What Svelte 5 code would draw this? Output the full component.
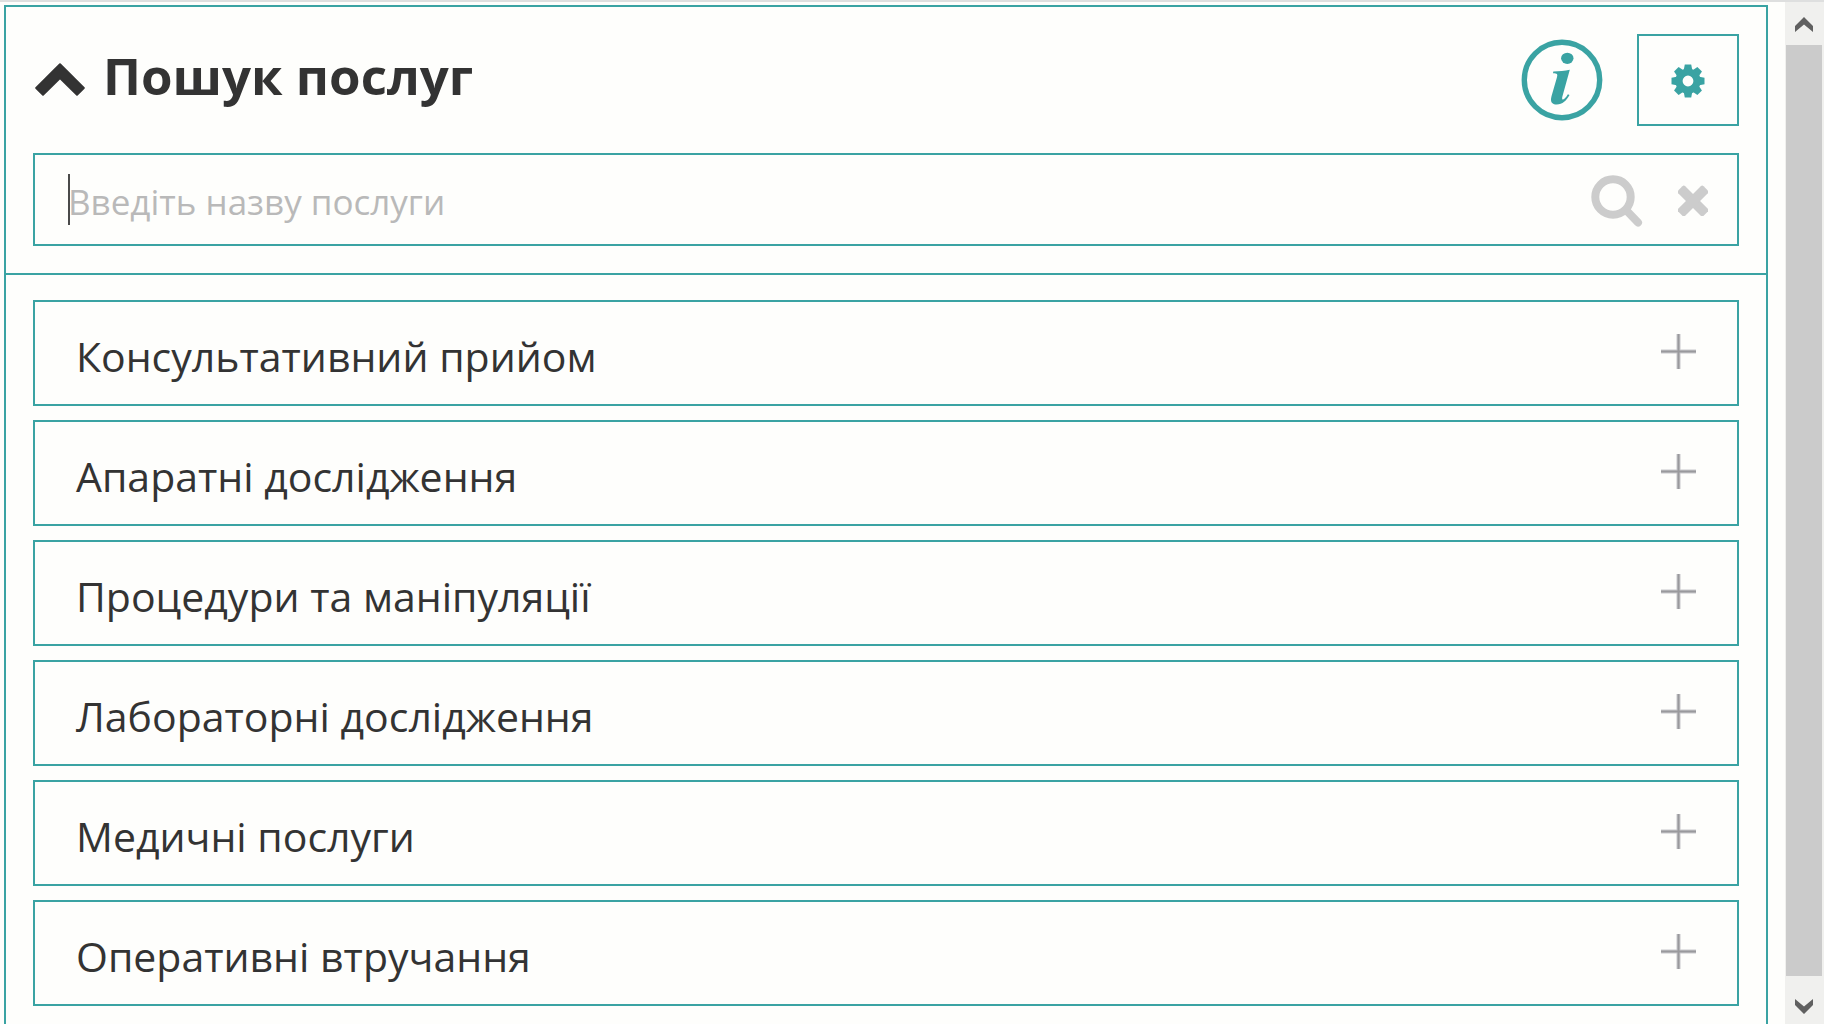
<script lang="ts">
  type Group = { id: number; title: string };

  const groups: Group[] = [
    { id: 1, title: "Консультативний прийом" },
    { id: 2, title: "Апаратні дослідження" },
    { id: 3, title: "Процедури та маніпуляції" },
    { id: 4, title: "Лабораторні дослідження" },
    { id: 5, title: "Медичні послуги" },
    { id: 6, title: "Оперативні втручання" }
  ];

  const teeth = [0, 45, 90, 135, 180, 225, 270, 315];

  let query = "";

  function clear() {
    query = "";
  }
</script>

<div class="page">
  <main class="panel">
    <header class="head">
      <div class="title-row">
        <button class="icon-btn" aria-label="Згорнути">
          <svg width="50" height="35" viewBox="0 0 50 35">
            <path d="M25 1.200 48.800 25 42 31.800 25 15 8 31.800 1.200 25z" fill="#333" stroke="#333" stroke-width="2" stroke-linejoin="round" />
          </svg>
        </button>
        <h1>Пошук послуг</h1>
        <button class="icon-btn info" aria-label="Інформація">
          <svg width="82" height="82" viewBox="0 0 82 82">
            <circle cx="41" cy="41" r="37.7" fill="none" stroke="#3aa3a3" stroke-width="5.4" />
            <ellipse cx="46.3" cy="19.3" rx="6.2" ry="5.6" fill="#3aa3a3" />
            <path d="M32.300 32.600C38 32.300 44 31.800 48.800 30.800L41.400 57.500c-.8 3.200.3 3.800 2 2.300 1.400-1.200 2.500-2.700 3.500-4.600l1.600.9C45.500 61.500 41.500 65.600 35.800 65.600c-5 0-6.800-3-5.300-8.300l5.400-18.800c1-3.500.4-4.300-3.900-4.300z" fill="#3aa3a3" />
          </svg>
        </button>
        <button class="settings" aria-label="Налаштування">
          <svg width="34" height="36" viewBox="-17 -19 34 36">
            {#each teeth as a}
              <path d="M-4.500-10-3.200-16.500h6.400L4.500-10z" fill="#3aa3a3" transform="rotate({a})" />
            {/each}
            <circle r="9" fill="none" stroke="#3aa3a3" stroke-width="7.2" />
          </svg>
        </button>
      </div>

      <div class="search">
        {#if !query}<span class="caret"></span>{/if}
        <input type="text" bind:value={query} placeholder="Введіть назву послуги" aria-label="Введіть назву послуги" />
        <button class="icon-btn" aria-label="Шукати">
          <svg width="52" height="54" viewBox="0 -2 52 54">
            <circle cx="22" cy="22" r="17.7" fill="none" stroke="#ccc" stroke-width="8" />
            <path d="m35 35 12 12.500" stroke="#ccc" stroke-width="8" stroke-linecap="round" />
          </svg>
        </button>
        <button class="icon-btn clear" aria-label="Очистити" on:click={clear}>
          <svg width="30" height="32" viewBox="-15 -17 30 32">
            <rect x="-18" y="-5" width="36" height="10" rx="2" fill="#ccc" transform="rotate(45)" />
            <rect x="-18" y="-5" width="36" height="10" rx="2" fill="#ccc" transform="rotate(-45)" />
          </svg>
        </button>
      </div>
    </header>

    <div class="list">
      {#each groups as g (g.id)}
        <button class="item">
          <span>{g.title}</span>
          <svg width="35" height="35" viewBox="0 0 35 35">
            <path d="M17.500 0v35M0 17.500h35" stroke="#c8c8cb" stroke-width="4" />
            <path d="M17.500 0v35M0 17.500h35" stroke="#99999d" stroke-width="2" />
          </svg>
        </button>
      {/each}
    </div>
  </main>

  <div class="scroll">
    <button class="arrow" aria-label="Вгору">
      <svg width="18" height="15" viewBox="0 0 18 15">
        <path d="m9 0 9 9v6L9 7.500 0 15V9z" fill="#606060" />
      </svg>
    </button>
    <div class="thumb"></div>
    <button class="arrow down" aria-label="Вниз">
      <svg width="18" height="15" viewBox="0 0 18 15">
        <path d="m9 15 9-9V0L9 7.500 0 0v6z" fill="#606060" />
      </svg>
    </button>
  </div>
</div>

<style>
  :global(body) {
    margin: 0;
    background: #fefefc;
    color: #333;
    font-family: "Segoe UI", "Open Sans", "Noto Sans", sans-serif;
  }
  .page {
    box-sizing: border-box;
    display: flex;
    height: 100vh;
    overflow: hidden;
    border-top: 2px solid #dedfdf;
  }
  .panel {
    flex: 1;
    min-width: 0;
    margin: 3px 17px 0 4px;
    border: 2px solid #3aa3a3;
    border-bottom: 0;
  }
  button { padding: 0; border: 0; background: none; color: inherit; font: inherit; cursor: pointer; }
  svg { display: block; }

  .head { padding: 27px; border-bottom: 2px solid #3aa3a3; }
  .title-row { display: flex; align-items: center; height: 92px; padding-left: 2px; }
  h1 { flex: 1; margin: 0 0 0 18px; padding-bottom: 10px; font-size: 51px; line-height: 72px; font-weight: 700; }
  .info { margin-right: 34px; }
  .settings {
    box-sizing: border-box;
    display: grid;
    place-items: center;
    width: 102px;
    height: 92px;
    border: 2px solid #3aa3a3;
  }

  .search {
    box-sizing: border-box;
    display: flex;
    align-items: center;
    height: 93px;
    margin-top: 27px;
    padding: 0 29px 0 33px;
    border: 2px solid #3aa3a3;
  }
  .caret { width: 2px; height: 51px; margin-right: -2px; background: #4a4a4a; }
  input {
    box-sizing: border-box;
    flex: 1;
    min-width: 0;
    height: 64px;
    padding: 4px 0 0;
    border: 0;
    outline: 0;
    background: none;
    color: #333;
    font: inherit;
    font-size: 35px;
  }
  input::placeholder { color: #b9b9b9; opacity: 1; }
  .clear { margin-left: 35px; }

  .list { display: flex; flex-direction: column; gap: 14px; padding: 25px 27px; }
  .item {
    box-sizing: border-box;
    display: flex;
    flex: none;
    justify-content: space-between;
    align-items: center;
    height: 106px;
    padding: 0 41px 3px;
    border: 2px solid #3aa3a3;
    font-size: 41px;
    line-height: 60px;
    text-align: left;
  }
  .item span { padding-top: 9px; }

  .scroll { display: flex; flex-direction: column; flex: none; width: 39px; background: #f0f0ee; }
  .arrow { box-sizing: border-box; display: grid; place-items: center; height: 43px; padding: 2px 1px 0 0; }
  .down { height: 48px; padding-top: 12px; }
  .thumb { flex: 1; margin: 0 2px 0 1px; background: #cbcbcb; }
</style>
